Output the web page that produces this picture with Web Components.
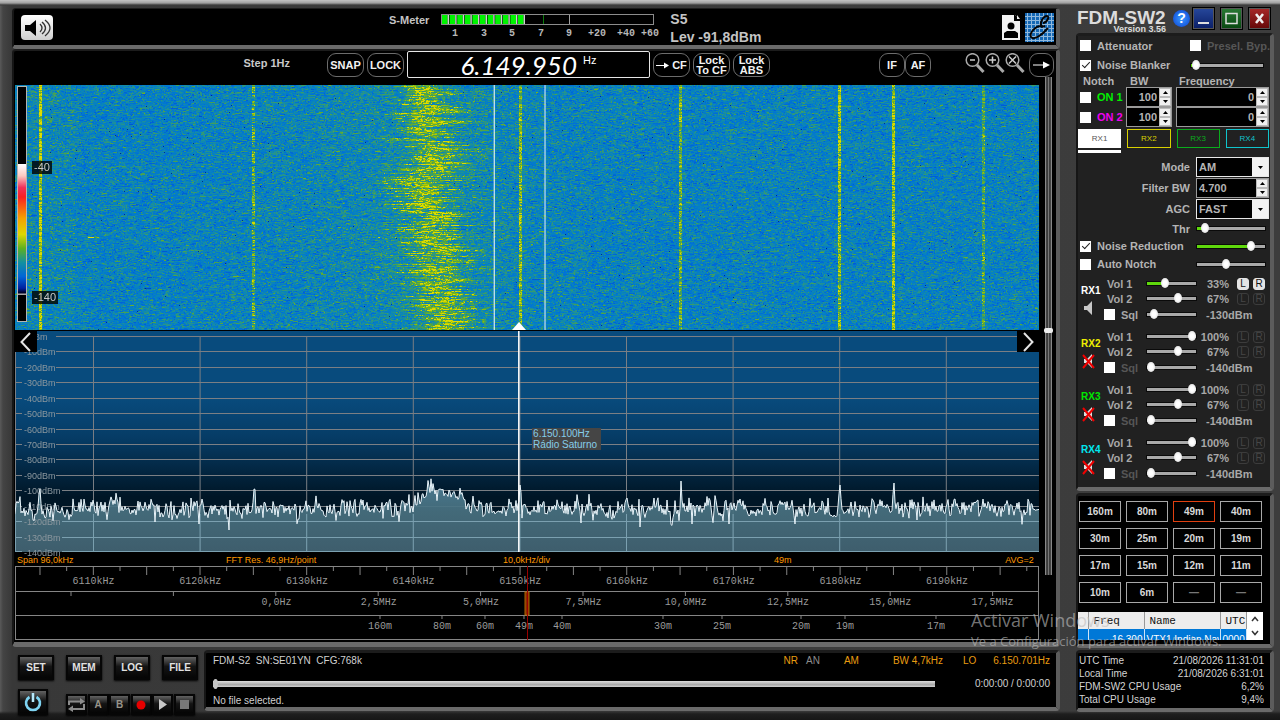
<!DOCTYPE html>
<html lang="en">
<head>
<meta charset="utf-8">
<title>FDM-SW2</title>
<style>
  html, body { margin: 0; min-height: 100vh; background: #3b3b3b; }
  body { font: 10px/12px "Liberation Sans", Arial, sans-serif; color: #c8c8c8; }
</style>
</head>
<body>
<sdr-app></sdr-app>
<script>
const BASE = `
  *, *::before, *::after { box-sizing: border-box; }
  button, input, select { font: inherit; color: inherit; margin: 0; padding: 0; border: 0; background: none; border-radius: 0; }
  button { cursor: pointer; }
`;
function define(name, css, html, ready) {
  const tpl = document.createElement('template');
  tpl.innerHTML = `<style>${BASE}${css}</style>${typeof html === 'string' ? html : ''}`;
  customElements.define(name, class extends HTMLElement {
    constructor() {
      super();
      this.attachShadow({ mode: 'open' }).appendChild(tpl.content.cloneNode(true));
    }
    connectedCallback() {
      if (this.started) return;
      this.started = true;
      if (typeof html === 'function') this.shadowRoot.innerHTML += html(this);
      if (ready) ready(this.shadowRoot, this);
    }
  });
}
const rng = seed => () => {
  seed = (seed + 0x6D2B79F5) | 0;
  let t = Math.imul(seed ^ (seed >>> 15), 1 | seed);
  t = (t + Math.imul(t ^ (t >>> 7), 61 | t)) ^ t;
  return ((t ^ (t >>> 14)) >>> 0) / 4294967296;
};
const pct = px => (px / 1024 * 100).toFixed(3) + '%';

/* ---------- shared parts ---------- */
define('sdr-panel', `
  :host { display: block; background: #000; border-style: solid; border-width: 3px 4px 4px 2px;
    border-color: #1c1c1c #5c5c5c #6a6a6a #161616; border-radius: 4px; }
`, `<slot></slot>`);

define('sdr-slider', `
  :host { display: block; height: 12px; }
  input { appearance: none; display: block; width: 100%; height: 12px; }
  input::-webkit-slider-runnable-track { height: 5px; border: 1px solid #0a0a0a;
    background: linear-gradient(to right, #5fd80c var(--fill), #a9a9a9 var(--fill)); }
  input::-webkit-slider-thumb { appearance: none; width: 8px; height: 10px; margin-top: -4px; border-radius: 50%;
    background: radial-gradient(#fff 30%, #d4d4d4); }
  :host([long]) input::-webkit-slider-runnable-track { height: 6px; border: 0; background: linear-gradient(#dedede, #a8a8a8 60%, #d0d0d0); }
  :host([long]) input::-webkit-slider-thumb { width: 5px; margin-top: -2px; background: #c6c6c6; }
`, el => `<input type="range" min="0" max="100" value="${el.getAttribute('value')}" aria-label="${el.getAttribute('label')}"
     style="--fill:${el.hasAttribute('filled') ? el.getAttribute('value') : 0}%">`);

define('sdr-check', `
  :host { display: block; font-weight: bold; font-size: 11px; }
  label { display: flex; align-items: center; gap: 6px; white-space: nowrap; }
  input { appearance: none; flex: none; width: 11px; height: 11px; background: #fff; display: grid; place-items: center; }
  input:checked::before { content: ""; width: 8px; height: 4px; margin-top: -2px; border: solid #222; border-width: 0 0 1px 1px; transform: rotate(-47deg); }
`, el => `<label><input type="checkbox" ${el.hasAttribute('checked') ? 'checked' : ''}><slot></slot></label>`);

define('sdr-spin', `
  :host { display: block; font-weight: bold; font-size: 11px; }
  div { display: flex; height: 20px; background: #000; border: 1px solid #9a9a9a; }
  input { flex: 1; min-width: 0; width: 0; padding: 0 2px; text-align: var(--align, right); }
  span { display: grid; grid-template-rows: 1fr 1fr; width: 12px; background: #e8e8e8; }
  button { display: grid; place-items: center; border: 1px solid #bbb; background: #f0f0f0; }
  svg { display: block; }
`, el => `<div><input type="text" value="${el.getAttribute('value')}" aria-label="${el.getAttribute('label')}">
  <span><button aria-label="Increase"><svg width="5" height="3"><path d="M0 3L2.5 0L5 3Z"/></svg></button>
  <button aria-label="Decrease"><svg width="5" height="3"><path d="M0 0L2.5 3L5 0Z"/></svg></button></span></div>`);

define('sdr-select', `
  :host { display: block; font-weight: bold; font-size: 11px; }
  div { display: flex; height: 20px; background: #000; border: 1px solid #e8e8e8; }
  select { appearance: none; flex: 1; min-width: 0; padding-left: 2px; }
  span { display: grid; place-items: center; width: 16px; background: #f2f2f2; pointer-events: none; }
`, el => `<div><select aria-label="${el.getAttribute('label')}"><option>${el.getAttribute('value')}</option></select>
  <span><svg width="5" height="3"><path d="M0 0L2.5 3L5 0Z"/></svg></span></div>`);

define('sdr-key', `
  :host { display: block; }
  button { display: grid; place-items: center; width: var(--w, 36px); height: var(--h, 25px); border: 2px solid #060606;
    background: linear-gradient(#626262, #383838 25%, #141414 45%, #050505); color: #e2e2e2; font-weight: bold; font-size: 10px;
    box-shadow: 0 1px 2px #000; }
  ::slotted(svg) { display: block; }
`, `<button><slot></slot></button>`);

define('round-button', `
  :host { display: block; }
  button { display: grid; place-items: center; align-content: center; width: var(--w, 37px); height: 24px; border: 1px solid #6c6c6c; border-radius: 9px;
    background: #000; color: #f2f2f2; font-weight: bold; font-size: 11px; line-height: 10px; white-space: nowrap; }
`, `<button><slot></slot></button>`);

/* ---------- header ---------- */
define('s-meter', `
  :host { display: grid; grid-template-columns: auto 214px auto; justify-content: start; column-gap: 12px; color: #c4c4c4; font-weight: bold; }
  .name { font-size: 11px; padding-top: 5px; }
  .level { padding: 1px 0 0 3px; font-size: 14px; line-height: 18px; white-space: pre; }
  svg { display: block; margin-top: 4px; }
  text { font: bold 10px "Liberation Mono", monospace; fill: #b8b8b8; text-anchor: middle; }
`, () => {
  let bars = '';
  for (let i = 0; i < 11; i++) bars += `<rect x="${1 + i * 7.6}" y="2" width="5.6" height="9" fill="#00f500"/><rect x="${6.6 + i * 7.6}" y="2" width="1.4" height="9" fill="#d0d0d0"/>`;
  const nums = [[14, '1'], [43, '3'], [71, '5'], [100, '7'], [128, '9'], [156, '+20'], [185, '+40'], [209, '+60']];
  return `<span class="name">S-Meter</span>
  <svg width="222" height="28">${bars}<rect x=".5" y="1.5" width="212" height="10" fill="none" stroke="#8c8c8c"/>
  <path d="M102.500 2v9" stroke="#0a7c0a"/><path d="M128.500 2v9" stroke="#a0a0a0"/>
  ${nums.map(n => `<text x="${n[0]}" y="23">${n[1]}</text>`).join('')}</svg>
  <span class="level">S5
Lev -91,8dBm</span>`;
});

define('sdr-header', `
  :host { display: grid; grid-template-columns: 375px 1fr auto; height: 36px; padding: 0 2px 0 0; }
  .sound { width: 32px; height: 25px; margin: 6px 0 0 7px; border-radius: 4px; background: linear-gradient(#fff, #cfcfcf); display: grid; place-items: center; }
  .side { display: flex; gap: 4px; padding-top: 4px; }
  .side svg, .sound svg { display: block; }
`, `
  <button class="sound" aria-label="Sound"><svg width="28" height="18" viewBox="0 0 28 18">
    <path d="M2 6h5l6-5v16l-6-5H2z" fill="#000"/><path d="M17 5q4 4 0 8M19 3q7 6 0 12M22 1q10 8 0 16" fill="none" stroke="#333" stroke-width="1.300"/></svg></button>
  <s-meter></s-meter>
  <div class="side">
    <svg width="19" height="29" viewBox="0 0 19 29"><path d="M0 2h13l5 6v19H0z" fill="#f2f2f2"/><path d="M12 1v7h7z" fill="#000"/><path d="M15 2v4h3z" fill="#eee"/><circle cx="9" cy="13" r="3.500"/><path d="M2 25v-5l3-2h8l3 2v5z"/></svg>
    <svg width="29" height="29" viewBox="0 0 29 29"><rect width="29" height="29" fill="#1467b4"/>
      <path d="M0 3.500h29M0 7.500h29M0 11.500h29M0 15.500h29M0 19.500h29M0 23.500h29M0 27.500h29M2.500 0v29M6.500 0v29M10.500 0v29M14.500 0v29M18.500 0v29M22.500 0v29M26.500 0v29" stroke="#8fb8dc"/>
      <path d="M18 10c4 0 7-7 4-7c-4 0-8 8-5 10c-6-1-13 7-11 11c3 4 12-3 17-9M16 14l4-1" fill="none" stroke="#050505" stroke-width="2"/></svg>
  </div>`);

define('tune-bar', `
  :host { display: grid; grid-template-columns: 97fr 243px 100fr; column-gap: 3px; align-items: start; height: 34px; padding: 0 1px 0 0; }
  div { display: flex; gap: 3px; }
  .left { justify-content: flex-end; padding-top: 2px; }
  .step { font-weight: bold; font-size: 11px; margin: 4px 34px 0 0; }
  .freq { height: 27px; border: 1px solid #e6e6e6; border-radius: 2px; justify-content: center; align-items: flex-start; gap: 6px; color: #fff; }
  .digits { font: italic 400 26px/26px Lato, "Open Sans", sans-serif; }
  .hz { font-size: 11px; padding-top: 2px; }
  .right { padding-top: 2px; }
  .bands { gap: 0; margin-left: auto; margin-right: 31px; }
  .zooms { gap: 0; margin-right: 1px; }
  .zooms button { width: 20px; height: 22px; }
  .zooms svg { display: block; }
  .cf { display: flex; gap: 3px; align-items: center; }
`, `
  <div class="left"><span class="step">Step 1Hz</span><round-button>SNAP</round-button><round-button>LOCK</round-button></div>
  <div class="freq"><span class="digits">6.149.950</span><span class="hz">Hz</span></div>
  <div class="right">
    <round-button><span class="cf"><svg width="13" height="7"><path d="M0 3.500h9" stroke="#fff"/><path d="M8 .5L13 3.500L8 6.500z" fill="#fff"/></svg>CF</span></round-button>
    <round-button>Lock<br>To CF</round-button>
    <round-button>Lock<br>ABS</round-button>
    <div class="bands"><round-button style="--w:26px">IF</round-button><round-button style="--w:26px">AF</round-button></div>
    <div class="zooms"></div>
    <round-button style="--w:25px"><svg width="17" height="8"><path d="M0 4h12" stroke="#fff"/><path d="M10 .5L17 4L10 7.500z" fill="#fff"/></svg></round-button>
  </div>`, root => {
  const marks = { 'Zoom out': 'M5 7h5', 'Zoom in': 'M4 7h7M7.500 3.500v7', 'Zoom reset': 'M4 3.500l7 7M11 3.500l-7 7' };
  root.querySelector('.zooms').innerHTML = Object.keys(marks).map(k =>
    `<button aria-label="${k}"><svg width="20" height="22" viewBox="0 0 20 22"><circle cx="7.500" cy="7" r="6.300" fill="none" stroke="#a8a8a8" stroke-width="1.500"/>
     <path d="${marks[k]}" stroke="#ccc" stroke-width="1.500"/><path d="M12 12l6.500 7" stroke="#a8a8a8" stroke-width="3"/></svg></button>`).join('');
});

/* ---------- waterfall ---------- */
define('sdr-waterfall', `
  :host { display: block; position: relative; height: 245px; }
  canvas { display: block; width: 100%; height: 100%; }
  .over { position: absolute; inset: 0; width: 100%; height: 100%; }
  .scale { position: absolute; left: 2px; top: 1px; width: 10px; height: 236px; border: 1px solid #b4b4b4;
    background: linear-gradient(#000 33%, #fff 33%, #fbc9c0 38%, #f0305a 43%, #fa2020 47%, #f5a000 56%, #dcd800 63%, #5db020 69%, #1290a0 75%, #0066d8 81%, #0020a0 86%, #000020 88%, #ccc 88.600%, #000 89%); }
  .tag { position: absolute; left: 17px; padding: 0 2px; font-size: 11px; line-height: 13px; background: rgba(0,0,0,.8); color: #c8c8c8; }
`, `<canvas width="1024" height="245"></canvas>
  <svg class="over"><line x1="46.800%" x2="46.800%" y2="100%" stroke="#fff"/><line x1="51.760%" x2="51.760%" y2="100%" stroke="#e8f0ff"/>
  <svg x="49.220%" y="237" width="14" height="8" style="overflow:visible"><path d="M-7 8L0 0L7 8z" fill="#fff"/></svg></svg>
  <div class="scale"></div><span class="tag" style="top:76px">-40</span><span class="tag" style="top:206px">-140</span>`,
root => {
  const c = root.querySelector('canvas'), W = 1024, H = 245, g = c.getContext('2d'), img = g.createImageData(W, H), r = rng(49);
  const stops = [[0, 0, 40, 130], [.18, 0, 88, 215], [.36, 0, 116, 214], [.5, 8, 132, 188], [.64, 38, 148, 138], [.76, 78, 164, 70], [.87, 140, 188, 12], [1, 226, 220, 0]];
  const color = v => {
    v = Math.max(0, Math.min(.999, v));
    let i = 0;
    while (stops[i + 1][0] <= v) i++;
    const a = stops[i], b = stops[i + 1], t = (v - a[0]) / (b[0] - a[0]);
    return [1, 2, 3].map(k => a[k] + (b[k] - a[k]) * t);
  };
  const lines = [[25, .45, 1.5], [238, .34, 1.2], [505, .38, 1.5], [665, .35, 1.2], [824, .44, 1.4], [878, .46, 1.2], [968, .28, 1.2]];
  const drift = [[0, 414], [40, 410], [80, 418], [102, 396], [130, 412], [180, 420], [245, 430]];
  for (let y = 0; y < H; y++) {
    let k = 0;
    while (drift[k + 1][0] < y) k++;
    const t = (y - drift[k][0]) / (drift[k + 1][0] - drift[k][0]);
    const cx = drift[k][1] + (drift[k + 1][1] - drift[k][1]) * t + (r() - .5) * 30;
    const lw = 9 + r() * 22 + (r() < .2 ? r() * 16 : 0), rw = 9 + r() * 26 + (r() < .25 ? r() * 30 : 0);
    const bands = lines.map(l => (l[0] === 238 && r() < .3 ? 0 : l[1] * (.7 + r() * .45)));
    const row = (y === 81 || y === 28 || y === 131) ? .04 : 0;
    let n = 0, s = 0;
    for (let x = 0; x < W; x++) {
      if (r() < .6) n = (r() + r() + r()) / 3 - .5;
      if (r() < .25) s = r();
      let v = .475 + n * .7 + row + (x < 60 ? .04 : 0) + .05 * Math.exp(-(((x - 400) / 130) ** 2));
      if (r() < .001) v = .02;
      const d = x - cx, w = d < 0 ? lw : rw;
      v += Math.exp(-((d / w) ** 2)) * (.15 + s * .38);
      lines.forEach((l, j) => { if (Math.abs(x - l[0]) < l[2]) v += bands[j]; });
      if (y === 152 && x > 72 && x < 84) v += .4;
      const p = color(v), o = (y * W + x) * 4;
      img.data[o] = p[0]; img.data[o + 1] = p[1]; img.data[o + 2] = p[2]; img.data[o + 3] = 255;
    }
  }
  g.putImageData(img, 0, 0);
});

/* ---------- spectrum ---------- */
define('sdr-spectrum', `
  :host { display: block; position: relative; height: 221px; margin-top: 1px; }
  svg.plot { display: block; width: 100%; height: 221px; overflow: visible; }
  text { font: 9px "Liberation Sans", Arial, sans-serif; fill: #8b979e; }
  button { position: absolute; top: 0; width: 22px; height: 21px; background: #000; display: grid; place-items: center; }
  .prev { left: 0; } .next { right: 0; }
  .note { position: absolute; left: 50.500%; top: 97px; padding: 0 4px 0 1px; background: #454545; color: #86cdea; font-size: 10px; line-height: 11px; white-space: pre; }
`, () => {
  const r = rng(6150), ys = [];
  const peaks = [[25, 18], [239, 18], [505, 22], [666, 26], [825, 22], [879, 24], [176, 9], [187, 8], [612, 9], [725, 8], [968, 8], [940, 8]];
  const dips = [[140, 12], [184, 14], [214, 20], [566, 13], [625, 17], [677, 14], [714, 14], [780, 14], [902, 10]];
  let slow = 0;
  for (let x = 0; x < 1024; x++) {
    slow = slow * .6 + (r() - .5) * 10;
    let y = 178 + slow + (r() + r() + r() - 1.5) * 8;
    y -= 20 * Math.exp(-(((x - 424) / 22) ** 2));
    peaks.forEach(p => { const d = Math.abs(x - p[0]); if (d < 1) y = 176 - p[1]; else if (d < 2) y -= p[1] * .5; });
    dips.forEach(p => { if (Math.abs(x - p[0]) < 1) y = 179 + p[1]; });
    ys.push(x + ' ' + y.toFixed(1));
  }
  const line = 'M' + ys.join('L') + 'L1024 178';
  const grid = (stroke) => {
    let s = `<g stroke="${stroke}">`;
    for (let i = 0; i < 15; i++) {
      const y = Math.min(220.5, Math.round(5 + i * 15.43) + .5);
      s += `<line x1="0" x2="7" y1="${y}" y2="${y}"/><line x1="${i >= 10 ? 47 : 41}" x2="100%" y1="${y}" y2="${y}"/>`;
    }
    for (let i = 0; i < 9; i++) { const x = pct(78.5 + i * 106.6); s += `<line x1="${x}" x2="${x}" y1="5" y2="221"/>`; }
    return s + '<line x1=".5" x2=".5" y1="5" y2="221"/></g>';
  };
  let labels = '';
  for (let i = 0; i < 15; i++) labels += `<text x="9" y="${Math.round(5 + i * 15.43) + 4}">${i ? -10 * i : '0'}dBm</text>`;
  return `<svg class="plot"><defs><linearGradient id="sky" x2="0" y2="1"><stop offset=".3" stop-color="#084b7d"/><stop offset=".48" stop-color="#063c66"/><stop offset=".75" stop-color="#001626"/></linearGradient>
    <linearGradient id="floor" x2="0" y2="1"><stop offset="0" stop-color="#4d8099"/><stop offset=".45" stop-color="#48707f"/><stop offset="1" stop-color="#436372"/></linearGradient></defs>
  <rect width="100%" height="100%" fill="url(#sky)"/>${grid('#7b7f84')}
  <svg viewBox="0 0 1024 221" preserveAspectRatio="none" width="100%" height="221">
    <path d="${line}V221H0Z" fill="url(#floor)" fill-opacity=".93"/></svg>
  <svg y="183" width="100%" height="38"><svg y="-183" width="100%" height="221">${grid('#7ba0b0')}</svg></svg>
  ${labels}
  <svg viewBox="0 0 1024 221" preserveAspectRatio="none" width="100%" height="221"><path d="${line}" fill="none" stroke="#e8f4fa"/></svg>
  <line x1="49.200%" x2="49.200%" y1="0" y2="221" stroke="#fff" stroke-width="1.500"/></svg>
  <button class="prev" aria-label="Previous"><svg width="12" height="20"><path d="M10 1L1.500 10L10 19" fill="none" stroke="#e4e4e4" stroke-width="2"/></svg></button>
  <button class="next" aria-label="Next"><svg width="12" height="20"><path d="M2 1L10.500 10L2 19" fill="none" stroke="#e4e4e4" stroke-width="2"/></svg></button>
  <span class="note">6.150.100Hz
Rádio Saturno</span>`;
});

/* ---------- frequency scales ---------- */
define('freq-scale', `
  :host { display: block; }
  svg { display: block; width: 100%; height: 89px; }
  text { font: 10px "Liberation Mono", "Courier New", monospace; fill: #9a9a9a; text-anchor: middle; }
  .info text { font: 9px "Liberation Sans", Arial, sans-serif; fill: #f90; text-anchor: start; }
  .info .end { text-anchor: end; }
`, () => {
  let s = '<svg><g class="info">';
  [[2, 'Span 96,0kHz'], [211, 'FFT Res. 46,9Hz/point'], [488, '10,0kHz/div'], [759, '49m']].forEach(a => s += `<text x="${pct(a[0])}" y="11">${a[1]}</text>`);
  s += `<text class="end" x="99.500%" y="11">AVG=2</text></g><g stroke="#858585" fill="none">
    <path d="M.5 14v74"/><line x1="0" x2="100%" y1="14.500" y2="14.500"/><line x1="0" x2="100%" y1="39.500" y2="39.500"/><line x1="0" x2="100%" y1="63.500" y2="63.500"/><line x1="0" x2="100%" y1="87.500" y2="87.500"/><line x1="99.950%" x2="99.950%" y1="14" y2="88"/>`;
  const tick = (px, y, h) => `<line x1="${pct(px)}" x2="${pct(px)}" y1="${y}" y2="${y + h}"/>`;
  const label = (px, y, t) => `<text x="${pct(px)}" y="${y}">${t}</text>`;
  const bands = [[365, '160m'], [427, '80m'], [470, '60m'], [509, '49m'], [547, '40m'], [648, '30m'], [707, '25m'], [786, '20m'], [830, '19m'], [921, '17m']];
  for (let i = 0; i < 38; i++) s += tick(25 + i * 26.67, 15, i % 2 ? 4 : 8);
  for (let i = 0; i < 10; i++) s += tick(56 + i * 102.4, 40, 4);
  bands.forEach(b => s += tick(b[0], 64, 3));
  s += '</g>';
  for (let i = 0; i < 9; i++) s += label(78.5 + i * 106.7, 32, 6110 + i * 10 + 'kHz');
  ['0,0Hz', '2,5MHz', '5,0MHz', '7,5MHz', '10,0MHz', '12,5MHz', '15,0MHz', '17,5MHz'].forEach((t, i) => s += label(261.5 + i * 102.3, 53, t));
  bands.forEach(b => s += label(b[0], 77, b[1]));
  return s + `<svg x="50%" style="overflow:visible"><rect x="-2" y="40" width="4" height="23" fill="#8a2a00" stroke="#b06a00"/><path d="M.5 14v74" stroke="#900"/></svg></svg>`;
});

define('sdr-scope', `
  :host { display: grid; grid-template-columns: minmax(0, 1fr) 16px; padding: 0 1px 1px 1px; }
  tune-bar { grid-column: 1 / 3; }
  .side { appearance: none; writing-mode: vertical-lr; width: 7px; height: 498px; margin: -8px 0 0 6px; }
  .side::-webkit-slider-runnable-track { width: 7px; background: linear-gradient(to right, #888 1px, #000 2px, #000 2px, #777 3px, #777 4px, #000 5px, #000 5px, #888 6px); }
  .side::-webkit-slider-thumb { appearance: none; width: 9px; height: 5px; margin-left: -1px; border-radius: 2px; background: #eee; }
`, `<tune-bar></tune-bar><div><sdr-waterfall></sdr-waterfall><sdr-spectrum></sdr-spectrum><freq-scale></freq-scale></div>
  <input class="side" type="range" value="51" aria-label="Split">`);

/* ---------- bottom ---------- */
define('key-deck', `
  :host { display: grid; gap: 9px; align-content: start; padding: 8px 0 0 6px; width: 192px; }
  div { display: flex; justify-content: space-between; align-items: flex-end; }
  .top { padding-right: 6px; }
  .tape { padding: 0 9px 0 18px; flex: 1; }
  svg { display: block; }
`, `
  <div class="top"><sdr-key>SET</sdr-key><sdr-key>MEM</sdr-key><sdr-key>LOG</sdr-key><sdr-key>FILE</sdr-key></div>
  <div><sdr-key style="--w:30px;--h:26px"><svg width="18" height="20" viewBox="0 0 18 20"><path d="M5.500 5a7 7 0 1 0 7 0M9 1v9" fill="none" stroke="#7fd4f2" stroke-width="2.600"/><path d="M9 1v9" stroke="#dff6ff" stroke-width="1.200"/></svg></sdr-key>
    <div class="tape" style="--w:21px;--h:21px">
      <sdr-key><svg width="17" height="14" viewBox="0 0 17 14"><path d="M1 7V3.500h12M16 6v5H4" fill="none" stroke="#8c8c8c" stroke-width="2"/><path d="M12 0l5 3.500l-5 3zM5 7.500v6.500L0 11z" fill="#8c8c8c"/></svg></sdr-key>
      <sdr-key><span style="color:#98958a">A</span></sdr-key><sdr-key><span style="color:#98958a">B</span></sdr-key>
      <sdr-key><svg width="10" height="10"><circle cx="5" cy="5" r="4.500" fill="#e60000"/></svg></sdr-key>
      <sdr-key><svg width="9" height="11"><path d="M1 0L9 5.500L1 11z" fill="#c8c8c8"/></svg></sdr-key>
      <sdr-key><svg width="9" height="9"><path d="M0 0h9v9H0z" fill="#777"/></svg></sdr-key>
    </div></div>`);

define('status-bar', `
  :host { display: grid; grid-template-columns: minmax(0, 1fr) auto; align-items: center; grid-template-rows: 16px 30px 4px; padding: 0 6px 0 7px; height: 54px; line-height: 12px; white-space: pre; color: #d0d0d0; }
  .state { display: flex; color: #e89c10; }
  .state span { margin-left: var(--g); }
  sdr-slider { margin-right: 115px; grid-column: 1 / 3; grid-row: 2; }
  .time { grid-column: 2; grid-row: 2; text-align: right; }
`, `
  <span>FDM-S2  SN:SE01YN  CFG:768k</span>
  <div class="state"><span>NR</span><span style="--g:8px;color:#8c8c8c">AN</span><span style="--g:24px">AM</span><span style="--g:34px">BW 4,7kHz</span><span style="--g:20px">LO</span><span style="--g:17px">6.150.701Hz</span></div>
  <sdr-slider long value="0" label="Playback position"></sdr-slider><span class="time">0:00:00 / 0:00:00</span>
  <span>No file selected.</span>`);

/* ---------- right column ---------- */
define('sdr-title', `
  :host { display: flex; height: 25px; color: #dcdcdc; }
  .name { width: 97px; padding-left: 1px; font-weight: bold; font-size: 19px; line-height: 20px; }
  .name small { display: block; font-size: 9px; line-height: 9px; margin-top: -3px; padding-right: 7px; text-align: right; }
  .help { width: 17px; height: 17px; margin-top: 2px; border-radius: 50%; background: radial-gradient(#3a9bff, #0a3fd0); color: #fff; font-weight: bold; font-size: 14px; line-height: 17px; text-align: center; text-decoration: none; }
  nav { display: flex; gap: 5px; margin: -1px 3px 0 auto; }
  button { width: 23px; height: 23px; border: 1px solid #000; outline: 1px solid #555; outline-offset: -2px; display: grid; place-items: center; color: #eee; }
`, `
  <span class="name">FDM-SW2<small>Version 3.56</small></span><a class="help" href="#help">?</a>
  <nav><button aria-label="Minimise" style="background:linear-gradient(#27489c,#0a1e66)"><svg width="13" height="13"><path d="M1 11h11" stroke="#ddd" stroke-width="2"/></svg></button>
  <button aria-label="Maximise" style="background:linear-gradient(#2a7a35,#07460f)"><svg width="13" height="13"><path d="M1 1.500h11v10H1z" fill="none" stroke="#ddd" stroke-width="1.500"/></svg></button>
  <button aria-label="Close" style="background:linear-gradient(#a82828,#640808)"><svg width="11" height="11"><path d="M2 1l7 9M9 1l-7 9" stroke="#eee" stroke-width="2.500"/></svg></button></nav>`);

define('rx-strip', `
  :host { display: grid; grid-template-columns: 24px 42px 51px 32px 1fr; grid-template-rows: 15px 15px 17px; align-items: center; margin-bottom: 6px; font-weight: bold; font-size: 11px; color: #a8a8a8; }
  .id { grid-row: 1 / 4; align-self: start; display: grid; justify-items: start; gap: 3px; padding: 9px 0 0 1px; font-size: 10px; }
  .id button { width: 16px; height: 16px; }
  .id svg { display: block; }
  .vol { padding-left: 3px; }
  .v { text-align: right; }
  .lr { display: flex; gap: 4px; padding-left: 8px; }
  .lr button { width: 12px; height: 12px; border: 1px solid #3c3c3c; border-radius: 3px; color: #464646; font-weight: normal; font-size: 10px; line-height: 10px; }
  .lr.on button { background: #e4e4e4; color: #111; border-color: #e4e4e4; }
  .db { grid-column: 4 / 6; padding-left: 9px; }
  .sq { color: var(--sql, #565656); }
`, el => {
  const a = n => el.getAttribute(n), on = el.hasAttribute('live');
  const cross = on ? '' : '<path d="M2 2l11 13M13 2L2 15" stroke="#f00000" stroke-width="2"/>';
  const lr = c => `<span class="lr ${c}"><button>L</button><button>R</button></span>`;
  return `<span class="id"><span style="color:${a('tone')}">${a('name')}</span><button aria-label="Mute ${a('name')}"><svg width="16" height="16"><path d="M3 6h3l5-5v14l-5-5H3z" fill="${on ? '#c8c8c8' : '#ddd'}"/>${cross}</svg></button></span>
  <span class="vol">Vol 1</span><sdr-slider ${on ? 'filled' : ''} value="${a('vol')}" label="Vol 1"></sdr-slider><span class="v">${a('vol')}%</span>${lr(on ? 'on' : '')}
  <span class="vol">Vol 2</span><sdr-slider value="67" label="Vol 2"></sdr-slider><span class="v">67%</span>${lr('')}
  <sdr-check class="sq" style="--sql:${on ? '#a8a8a8' : '#565656'}">Sql</sdr-check><sdr-slider value="${a('sq')}" label="Squelch"></sdr-slider><span class="db">${a('db')}</span>`;
});

define('sdr-settings', `
  :host { display: block; padding: 0 1px 0 2px; background: #212121; font-weight: bold; font-size: 11px; color: #b4b4b4; height: 451px; }
  .row { display: grid; align-items: center; height: 20px; }
  .a { height: 19px; } .b { height: 18px; }
  .dim { color: #565656; }
  .heads { display: grid; grid-template-columns: 47px 49px 1fr; line-height: 12px; padding-left: 3px; }
  .notch { display: grid; grid-template-columns: 42px 46px 1fr; column-gap: 4px; height: 20px; align-items: center; }
  .tabs { display: flex; gap: 6px; height: 30px; padding: 2px 0 0 0; margin-left: -2px; }
  .tabs button { position: relative; flex: 1; height: 19px; border: 1px solid; font-size: 8px; font-weight: normal; line-height: 14px; }
  .tabs button.on { background: #fff; border-color: #fff; }
  .tabs button.on span { color: #555; }
  .tabs button.on::after { content: ""; position: absolute; left: -1px; right: -1px; top: 20px; height: 3px; background: #fff; }
  .pair { display: grid; grid-template-columns: 110px 1fr; column-gap: 6px; align-items: center; margin-bottom: 1px; }
  .pair > span, .thr > span { text-align: right; }
  .thr { display: grid; grid-template-columns: 110px 70px; column-gap: 6px; height: 17px; align-items: center; }
  rx-strip:first-of-type { margin-top: 3px; }
`, `
  <div class="row a" style="grid-template-columns:110px 1fr"><sdr-check>Attenuator</sdr-check><sdr-check class="dim">Presel. Byp.</sdr-check></div>
  <div class="row" style="grid-template-columns:110px 74px"><sdr-check checked>Noise Blanker</sdr-check><sdr-slider filled value="2" label="Noise Blanker level"></sdr-slider></div>
  <div class="heads"><span>Notch</span><span>BW</span><span>Frequency</span></div>
  <div class="notch"><sdr-check style="color:#00f000">ON 1</sdr-check><sdr-spin value="100" label="Notch 1 bandwidth"></sdr-spin><sdr-spin value="0" label="Notch 1 frequency"></sdr-spin></div>
  <div class="notch"><sdr-check style="color:#f000f0">ON 2</sdr-check><sdr-spin value="100" label="Notch 2 bandwidth"></sdr-spin><sdr-spin value="0" label="Notch 2 frequency"></sdr-spin></div>
  <div class="tabs"><button class="on"><span>RX1</span></button><button style="color:#d8d000">RX2</button><button style="color:#0aac1c">RX3</button><button style="color:#10c4cc">RX4</button></div>
  <div class="pair"><span>Mode</span><sdr-select label="Mode" value="AM"></sdr-select></div>
  <div class="pair"><span>Filter BW</span><sdr-spin style="--align:left" label="Filter BW" value="4.700"></sdr-spin></div>
  <div class="pair"><span>AGC</span><sdr-select label="AGC" value="FAST"></sdr-select></div>
  <div class="thr"><span>Thr</span><sdr-slider filled value="7" label="AGC threshold"></sdr-slider></div>
  <div class="row b" style="grid-template-columns:116px 70px"><sdr-check checked>Noise Reduction</sdr-check><sdr-slider filled value="84" label="Noise Reduction level"></sdr-slider></div>
  <div class="row b" style="grid-template-columns:116px 70px"><sdr-check>Auto Notch</sdr-check><sdr-slider value="42" label="Auto Notch level"></sdr-slider></div>
  <rx-strip name="RX1" tone="#ffffff" vol="33" sq="7" db="-130dBm" live></rx-strip>
  <rx-strip name="RX2" tone="#f0f000" vol="100" sq="0" db="-140dBm"></rx-strip>
  <rx-strip name="RX3" tone="#00e800" vol="100" sq="0" db="-140dBm"></rx-strip>
  <rx-strip name="RX4" tone="#00e8f0" vol="100" sq="0" db="-140dBm"></rx-strip>`);

define('band-grid', `
  :host { display: grid; grid-template-columns: repeat(4, 42px); gap: 6px 5px; padding: 5px 0 0 1px; }
  button { height: 21px; border: 1px solid #a8a8a8; color: #d8d8d8; font-weight: bold; font-size: 10px; }
  button.on { border-color: #e04010; }
  button.none { color: #777; }
`, () => ['160m', '80m', '49m', '40m', '30m', '25m', '20m', '19m', '17m', '15m', '12m', '11m', '10m', '6m', '—', '—']
  .map(b => `<button class="${b === '49m' ? 'on' : b === '—' ? 'none' : ''}">${b}</button>`).join(''));

define('memory-list', `
  :host { display: flex; height: 28px; margin: 9px 7px 0 0; overflow: hidden; background: #fff; }
  .clip { flex: 1; min-width: 0; overflow: hidden; }
  table { width: 169px; border-collapse: collapse; table-layout: fixed; }
  th { height: 17px; padding: 0 0 0 5px; font: 11px/16px "Liberation Mono", monospace; text-align: left; color: #111; background: #ededed; border-right: 1px solid #999; }
  td { height: 16px; padding: 5px 1px 0 2px; font-size: 10px; line-height: 12px; white-space: nowrap; overflow: hidden; color: #fff; background: #0078d7; border-right: 1px solid #cfe4f7; }
  .num { text-align: right; }
  .bar { display: grid; width: 16px; background: #fff; }
  .bar button { display: grid; place-items: center; }
`, `<div class="clip"><table><colgroup><col style="width:10px"><col style="width:56px"><col style="width:76px"><col></colgroup>
  <thead><tr><th></th><th>Freq</th><th>Name</th><th>UTC</th></tr></thead>
  <tbody><tr><td></td><td class="num">16.300</td><td>VTX1 Indian Navy</td><td>0000 2</td></tr></tbody></table></div>
  <div class="bar"><button aria-label="Scroll up"><svg width="8" height="6"><path d="M1 5L4 1.500L7 5" fill="none" stroke="#333" stroke-width="1.500"/></svg></button>
  <button aria-label="Scroll down"><svg width="8" height="6"><path d="M1 1L4 4.500L7 1" fill="none" stroke="#333" stroke-width="1.500"/></svg></button></div>`);

define('sdr-clock', `
  :host { display: block; padding: 1px 6px 2px 1px; color: #d4d4d4; }
  dl { margin: 0; line-height: 13px; white-space: nowrap; }
  dl div { display: flex; justify-content: space-between; }
  dd { margin: 0; text-align: right; }
`, `<dl><div><dt>UTC Time</dt><dd>21/08/2026 11:31:01</dd></div><div><dt>Local Time</dt><dd>21/08/2026 6:31:01</dd></div>
  <div><dt>FDM-SW2 CPU Usage</dt><dd>6,2%</dd></div><div><dt>Total CPU Usage</dt><dd>9,4%</dd></div></dl>`);

define('activation-note', `
  :host { position: absolute; right: 52px; bottom: 69px; width: 257px; pointer-events: none; color: rgba(190,190,190,.62);
    font: 13px/20px "Open Sans", "Noto Sans", sans-serif; white-space: nowrap; }
  p { margin: 0; } .big { font-size: 18px; line-height: 22px; }
`, `<p class="big">Activar Windows</p><p>Ve a Configuración para activar Windows.</p>`);

define('sdr-app', `
  :host { position: relative; display: grid; grid-template-columns: minmax(0, 1fr) 198px; column-gap: 16px; min-height: 100vh; padding: 8px 6px 0 12px; box-sizing: border-box;
    background: linear-gradient(#c4c4c4, #a0a0a0 3px, #3b3b3b 5px, transparent 6px), linear-gradient(to top, #161616, #1e1e1e 6px, transparent 9px), linear-gradient(to right, #5a5a5a, #444 3px, #383838 12px, #3d3d3d); }
  .head { border-width: 1px 4px 4px 2px; } .main { border-width: 2px 4px 5px 2px; }
  .foot { display: flex; }
  .status { flex: 1; margin-top: 3px; align-self: start; }
  .bands { margin-top: 2px; height: 155px; border-top-width: 3px; }
  .clock { margin-top: 2px; }
`, `
  <main>
    <sdr-panel class="head"><sdr-header></sdr-header></sdr-panel>
    <sdr-panel class="main"><sdr-scope></sdr-scope></sdr-panel>
    <div class="foot"><key-deck></key-deck><sdr-panel class="status"><status-bar></status-bar></sdr-panel></div>
  </main>
  <aside>
    <sdr-title></sdr-title>
    <sdr-panel><sdr-settings></sdr-settings></sdr-panel>
    <sdr-panel class="bands"><band-grid></band-grid><memory-list></memory-list></sdr-panel>
    <sdr-panel class="clock"><sdr-clock></sdr-clock></sdr-panel>
  </aside>
  <activation-note></activation-note>`);
</script>
</body>
</html>
